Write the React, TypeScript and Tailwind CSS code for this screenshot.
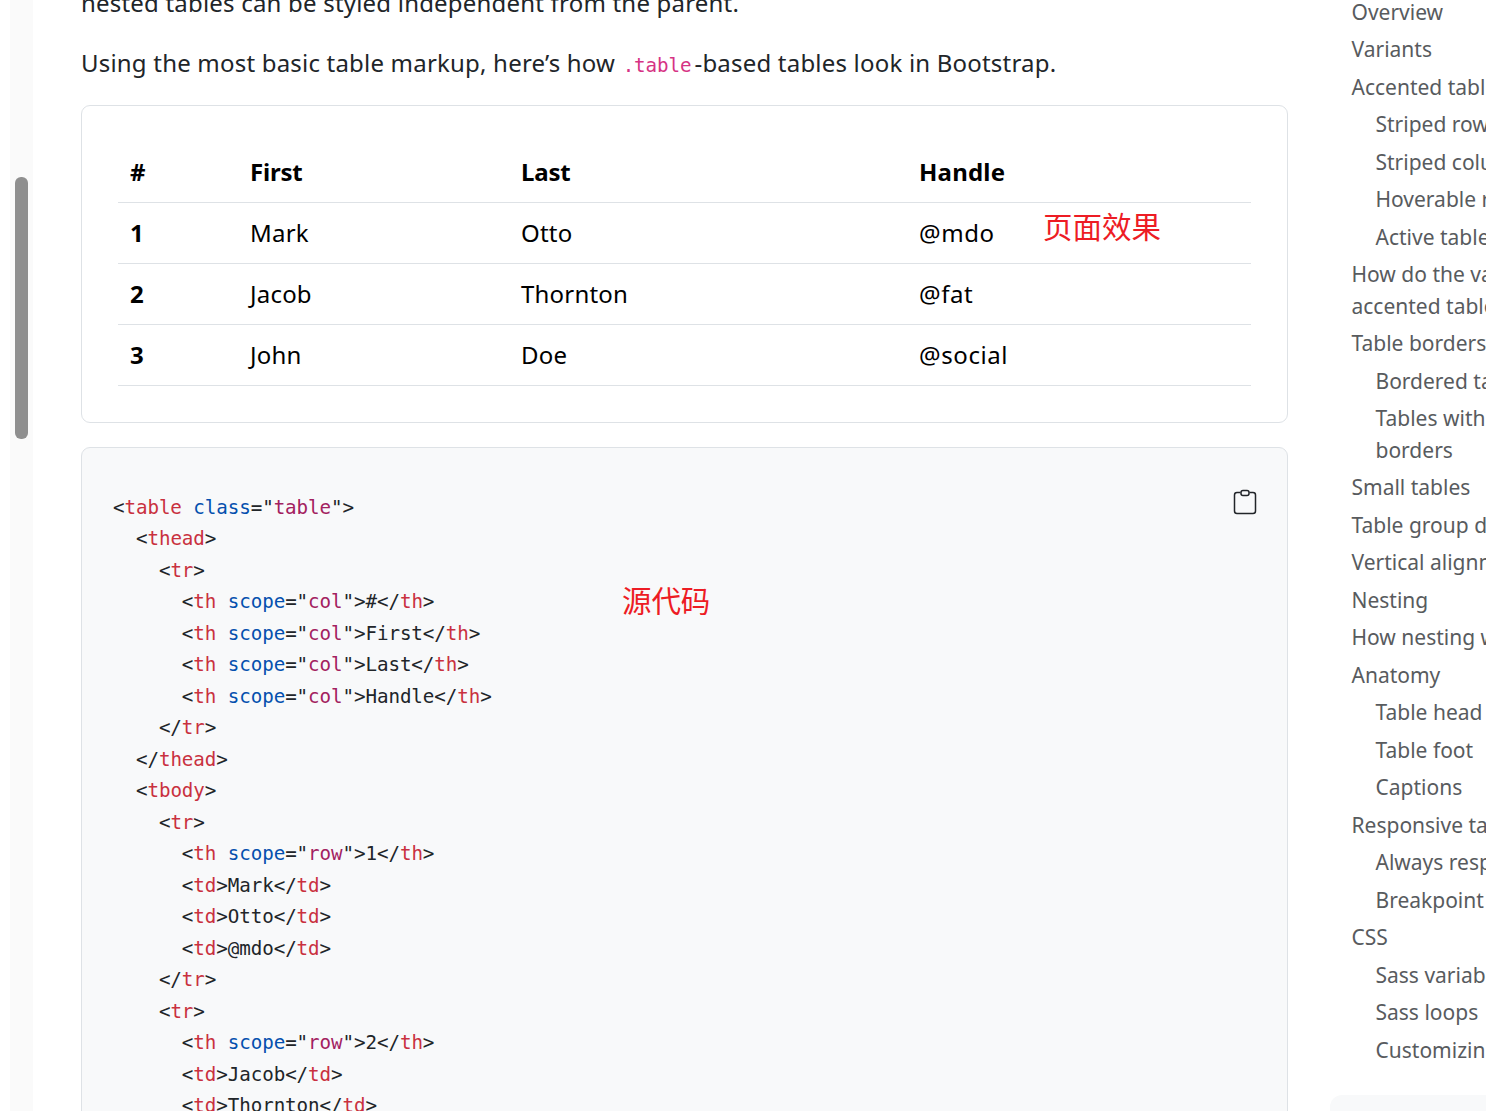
const sans = { fontFamily: '"Noto Sans", sans-serif' }

const rows = [
  { id: '1', first: 'Mark', last: 'Otto', handle: '@mdo' },
  { id: '2', first: 'Jacob', last: 'Thornton', handle: '@fat' },
  { id: '3', first: 'John', last: 'Doe', handle: '@social' },
]

const code = `<table class="table">
  <thead>
    <tr>
      <th scope="col">#</th>
      <th scope="col">First</th>
      <th scope="col">Last</th>
      <th scope="col">Handle</th>
    </tr>
  </thead>
  <tbody>
    <tr>
      <th scope="row">1</th>
      <td>Mark</td>
      <td>Otto</td>
      <td>@mdo</td>
    </tr>
    <tr>
      <th scope="row">2</th>
      <td>Jacob</td>
      <td>Thornton</td>
    </tr>
  </tbody>
</table>`.split('\n')

const toc = [
  { label: 'Overview' },
  { label: 'Variants' },
  { label: 'Accented tables' },
  { label: 'Striped rows', sub: true },
  { label: 'Striped columns', sub: true },
  { label: 'Hoverable rows', sub: true },
  { label: 'Active tables', sub: true },
  { label: 'How do the variants and', more: 'accented tables work?' },
  { label: 'Table borders' },
  { label: 'Bordered tables', sub: true },
  { label: 'Tables without', more: 'borders', sub: true },
  { label: 'Small tables' },
  { label: 'Table group dividers' },
  { label: 'Vertical alignment' },
  { label: 'Nesting' },
  { label: 'How nesting works' },
  { label: 'Anatomy' },
  { label: 'Table head', sub: true },
  { label: 'Table foot', sub: true },
  { label: 'Captions', sub: true },
  { label: 'Responsive tables' },
  { label: 'Always responsive', sub: true },
  { label: 'Breakpoint specific', sub: true },
  { label: 'CSS' },
  { label: 'Sass variables', sub: true },
  { label: 'Sass loops', sub: true },
  { label: 'Customizing', sub: true },
]

function CodeLine({ line }: { line: string }) {
  // rough html highlighter, enough for these lines
  const parts = line.split(/(<\/?|>|="|")/)
  let inTag = false
  let inStr = false
  return (
    <div className="h-[31.5px] whitespace-pre">
      {parts.map((p, i) => {
        if (p === '<' || p === '</') {
          inTag = true
          return <span key={i}>{p}</span>
        }
        if (p === '>') {
          inTag = false
          return <span key={i}>{p}</span>
        }
        if (p === '="') {
          inStr = true
          return <span key={i}>{p}</span>
        }
        if (p === '"') {
          inStr = false
          return <span key={i}>{p}</span>
        }
        if (inStr) return <span key={i} className="text-[#a3215f]">{p}</span>
        if (inTag) {
          const m = p.match(/^(\S+)(\s+)?(\S+)?$/)
          if (!m) return <span key={i}>{p}</span>
          return (
            <span key={i}>
              <span className="text-[#c9313f]">{m[1]}</span>
              {m[2]}
              <span className="text-[#0550ae]">{m[3]}</span>
            </span>
          )
        }
        return <span key={i}>{p}</span>
      })}
    </div>
  )
}

export default function App() {
  return (
    <div className="flex h-[1111px] overflow-hidden bg-white text-[#212529]" style={sans}>
      <div className="ml-[10px] h-full w-[23px] shrink-0 bg-[#fafafa] pl-[5px] pt-[177px]">
        <div className="h-[262px] w-[13px] rounded-[6px] bg-[#8f8f8f]" />
      </div>

      <main className="ml-[48px] mt-[-15px] w-[1207px] shrink-0">
        <p className="h-[36px] text-[24px] leading-[36px] tracking-[0.2px]">
          nested tables can be styled independent from the parent.
        </p>
        <p className="mt-[24px] h-[36px] whitespace-nowrap text-[24px] leading-[36px] tracking-[0.2px]">
          Using the most basic table markup, here’s how{' '}
          <code className="ml-[1px] mr-[3px] font-['DejaVu_Sans_Mono',monospace] text-[19.2px] tracking-[-0.08px] text-[#d63384]">.table</code>
          -based tables look in Bootstrap.
        </p>

        <div className="relative mt-[24px] h-[318px] rounded-[9px] border border-[#dee2e6] p-[36px]">
          <table className="w-[1133px] table-fixed border-collapse text-[24px] leading-[36px] tracking-[0.2px] text-black">
            <thead>
              <tr className="border-b border-[#dee2e6]">
                <th className="w-[120px] px-[12px] py-[12px] text-left font-bold">#</th>
                <th className="w-[271px] px-[12px] py-[12px] text-left font-bold tracking-[-0.2px]">First</th>
                <th className="w-[398px] px-[12px] py-[12px] text-left font-bold tracking-[-0.2px]">Last</th>
                <th className="w-[344px] px-[12px] py-[12px] text-left font-bold">Handle</th>
              </tr>
            </thead>
            <tbody>
              {rows.map((r) => (
                <tr key={r.id} className="border-b border-[#dee2e6]">
                  <th className="px-[12px] py-[12px] text-left font-bold">{r.id}</th>
                  <td className="px-[12px] py-[12px]">{r.first}</td>
                  <td className="px-[12px] py-[12px]">{r.last}</td>
                  <td className="px-[12px] py-[12px] tracking-[0.6px]">{r.handle}</td>
                </tr>
              ))}
            </tbody>
          </table>
          <span className="absolute left-[961px] top-[98.5px] font-['Noto_Sans_CJK_SC',sans-serif] text-[29.5px] leading-[40px] text-[#ed1c24]">
            页面效果
          </span>
        </div>

        <div className="relative mt-[24px] h-[800px] rounded-[9px] border border-[#dee2e6] bg-[#f8f9fa] pl-[31px] pt-[43.5px] font-['DejaVu_Sans_Mono',monospace] text-[19.2px] leading-[31.5px] tracking-[-0.08px] text-[#212529]">
          {code.map((line, i) => (
            <CodeLine key={i} line={line} />
          ))}
          <span className="absolute left-[540px] top-[130.5px] font-['Noto_Sans_CJK_SC',sans-serif] text-[29.5px] leading-[40px] text-[#ed1c24]">
            源代码
          </span>
          <svg
            className="absolute left-[1151px] top-[41px]"
            width="24"
            height="26"
            viewBox="0 0 24 26"
            fill="none"
            stroke="#212529"
            strokeWidth="1.5"
          >
            <path d="M7.5 3.5H4a2.5 2.5 0 0 0-2.5 2.5v16a2.5 2.5 0 0 0 2.5 2.5h16a2.5 2.5 0 0 0 2.5-2.5V6a2.5 2.5 0 0 0-2.5-2.5h-3.5" />
            <rect x="8" y="1.5" width="8" height="5" rx="2" />
          </svg>
        </div>
      </main>

      <nav className="ml-[63.5px] mt-[-6.5px] w-[134px] shrink-0 text-[21px] leading-[31.5px] text-[#585b5e]">
        <ul>
          {toc.map((item) => (
            <li key={item.label} className={`whitespace-nowrap py-[3px] ${item.sub ? 'pl-[24px]' : ''}`}>
              {item.label}
              {item.more && (
                <>
                  <br />
                  {item.more}
                </>
              )}
            </li>
          ))}
        </ul>
        <div className="ml-[-22px] mt-[26px] h-[100px] w-[300px] rounded-[12px] bg-[#f8f9fa]" />
      </nav>
    </div>
  )
}
